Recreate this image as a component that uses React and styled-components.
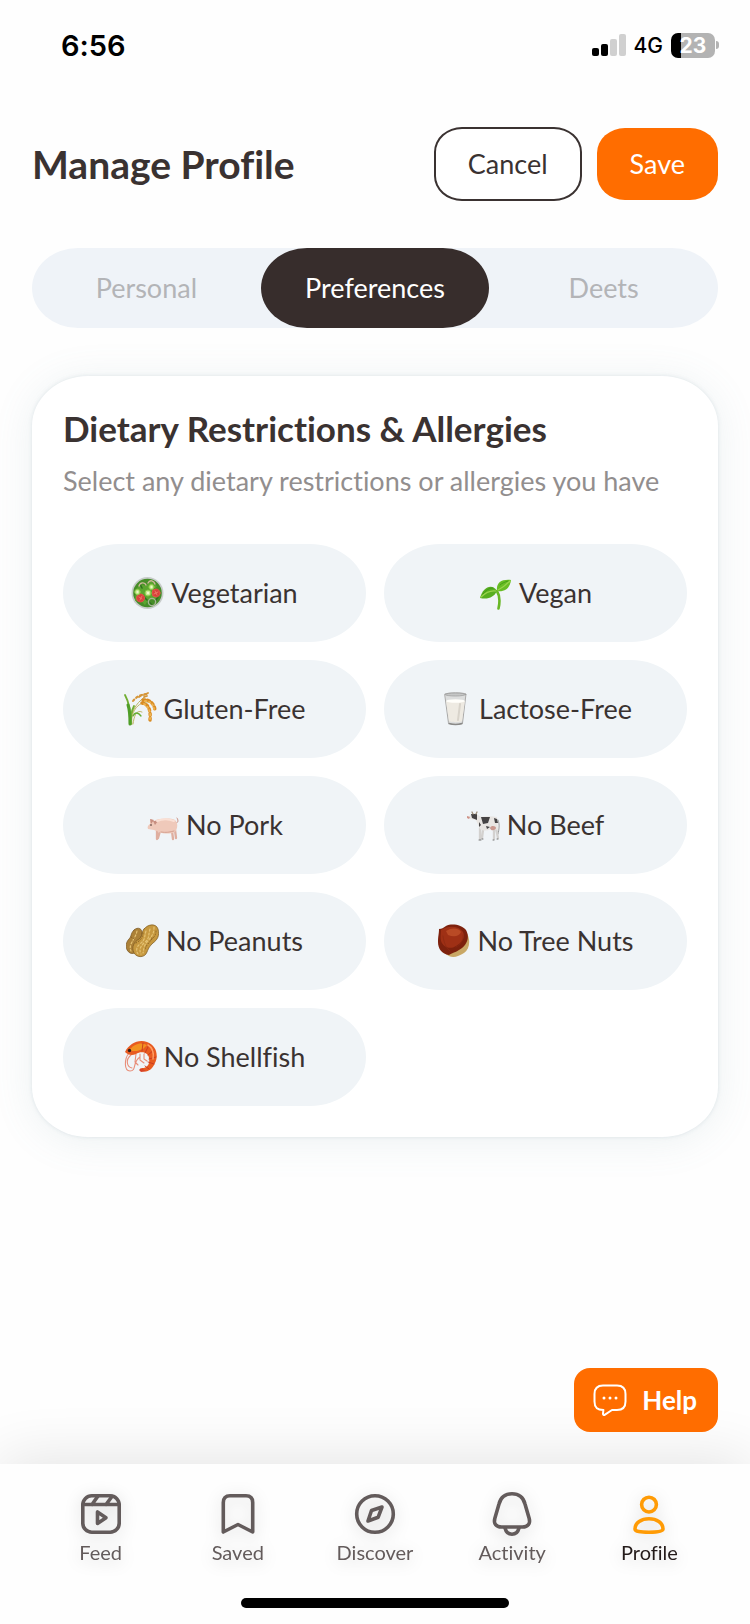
import React, { useState } from "react";
import styled, { createGlobalStyle, css } from "styled-components";

const ink = "#3a3231";
const orange = "#ff6d00";

const GlobalStyle = createGlobalStyle`
  *, *::before, *::after { box-sizing: border-box; }
  body {
    margin: 0;
    background: #fefefe;
    color: ${ink};
    font-family: Lato, "Liberation Sans", sans-serif;
    font-variant-ligatures: none;
  }
  button { font: inherit; font-variant-ligatures: none; cursor: pointer; border: 0; }
  h1, h2, p { margin: 0; }
  svg { display: block; flex: none; }
`;

const Screen = styled.div`
  min-height: 100vh;
  display: flex;
  flex-direction: column;
`;

const StatusBar = styled.div`
  display: flex;
  align-items: center;
  justify-content: space-between;
  height: 90px;
  padding: 0 31px 0 61px;
  color: #000;
  font-family: Inter, "Liberation Sans", sans-serif;
`;

const Time = styled.span`
  font-size: 29px;
  font-weight: 600;
`;

const StatusIcons = styled.div`
  display: flex;
  align-items: center;
  gap: 8px;
  font-size: 21px;
  font-weight: 500;
`;

const Battery = styled.div`
  display: flex;
  align-items: center;
  gap: 1px;
  &::after {
    content: "";
    width: 3px;
    height: 8px;
    border-radius: 0 4px 4px 0;
    background: #b3b3b3;
  }
`;

const BatteryLevel = styled.span`
  width: 44px;
  height: 25px;
  border-radius: 7px;
  background: linear-gradient(to right, #000 10px, #b3b3b3 10px);
  color: #fff;
  font-size: 21px;
  font-weight: 700;
  line-height: 25px;
  text-align: center;
`;

const Header = styled.header`
  display: flex;
  align-items: center;
  gap: 15px;
  padding: 37px 32px 0;
`;

const Title = styled.h1`
  flex: 1;
  font-size: 39px;
  line-height: 48px;
  font-weight: 700;
`;

const ActionButton = styled.button`
  height: ${(p) => (p.$primary ? 72 : 74)}px;
  padding: 0 ${(p) => (p.$primary ? 33 : 32)}px;
  border-radius: 28px / 25px;
  font-size: 27px;
  line-height: 30px;
  ${(p) =>
    p.$primary
      ? css`
          background: ${orange};
          color: #fff;
        `
      : css`
          background: #fff;
          color: ${ink};
          border: 2px solid ${ink};
        `}
`;

const Tabs = styled.div`
  display: grid;
  grid-template-columns: repeat(3, 1fr);
  margin: 47px 32px 0;
  border-radius: 46px / 40px;
  background: #eff3f8;
`;

const Tab = styled.button`
  height: 80px;
  border-radius: 46px / 40px;
  font-size: 27px;
  line-height: 30px;
  background: ${(p) => (p.$active ? "#372d2c" : "transparent")};
  color: ${(p) => (p.$active ? "#fff" : "#b3b4b7")};
`;

const Card = styled.section`
  margin: 48px 32px 0;
  padding: 31px;
  border-radius: 56px / 50px;
  background: #fff;
  box-shadow: 0 0 4px rgba(110, 140, 155, 0.18), 0 4px 40px rgba(110, 150, 160, 0.12);
`;

const CardTitle = styled.h2`
  font-size: 35px;
  line-height: 42px;
  font-weight: 700;
`;

const CardHint = styled.p`
  margin-top: 16px;
  font-size: 27px;
  line-height: 32px;
  color: #928e8e;
`;

const Options = styled.div`
  display: grid;
  grid-template-columns: 1fr 1fr;
  gap: 18px;
  margin-top: 47px;
`;

const Option = styled.button`
  display: flex;
  align-items: center;
  justify-content: center;
  gap: 7px;
  height: 98px;
  border-radius: 56px / 49px;
  background: #f0f4f7;
  color: ${ink};
  font-size: 27px;
  line-height: 30px;
  box-shadow: ${(p) => (p.$selected ? `inset 0 0 0 3px ${orange}` : "none")};
`;

const HelpButton = styled.button`
  display: flex;
  align-items: center;
  gap: 15px;
  align-self: flex-end;
  position: relative;
  z-index: 1;
  height: 64px;
  margin: auto 32px 32px 0;
  padding: 0 21px 0 19px;
  border-radius: 16px;
  background: ${orange};
  color: #fff;
  font-size: 26px;
  font-weight: 700;
`;

const BottomBar = styled.footer`
  padding: 28px 32px 16px;
  background: #fefefe;
  box-shadow: 0 -4px 60px rgba(0, 0, 0, 0.11);
`;

const Nav = styled.nav`
  display: grid;
  grid-template-columns: repeat(5, 1fr);
`;

const NavLink = styled.a`
  display: flex;
  flex-direction: column;
  align-items: center;
  gap: 4px;
  color: ${(p) => (p.$active ? "#241b1a" : "#635b5b")};
  font-size: 20px;
  line-height: 24px;
  text-decoration: none;
  filter: drop-shadow(0 3px 8px rgba(0, 0, 0, 0.16));
  svg { color: ${(p) => (p.$active ? "#ff9b05" : "#635b5b")}; }
`;

const HomeIndicator = styled.div`
  width: 268px;
  height: 10px;
  margin: 34px auto 0;
  border-radius: 5px;
  background: #000;
`;

const SignalIcon = () => (
  <svg width="34" height="22" viewBox="0 0 34 22" aria-hidden="true">
    <rect x="0" y="14" width="7" height="8" rx="2" />
    <rect x="9" y="10" width="7" height="12" rx="2" />
    <rect x="18" y="5" width="7" height="17" rx="2" fill="#d0d0d0" />
    <rect x="27" y="0" width="7" height="22" rx="2" fill="#d0d0d0" />
  </svg>
);

const ChatIcon = () => (
  <svg width="34" height="34" viewBox="0 0 34 34" fill="none" stroke="currentColor" strokeWidth="2" strokeLinejoin="round" aria-hidden="true">
    <path d="M10 2.5h14c6 0 8.5 2.5 8.5 8.5v7.5c0 6-2.5 8.5-8.5 8.5h-5l-7 4.7c-1.2.8-2.2.2-2-1.2l.4-3.5C4 27 1.5 24.5 1.5 18.5V11C1.5 5 4 2.5 10 2.5Z" />
    <g fill="currentColor" stroke="none">
      <circle cx="11" cy="15" r="1.5" />
      <circle cx="17" cy="15" r="1.5" />
      <circle cx="23" cy="15" r="1.5" />
    </g>
  </svg>
);

const NavSvg = ({ children }) => (
  <svg width="44" height="44" viewBox="0 0 44 44" fill="none" stroke="currentColor" strokeWidth="3.6" strokeLinecap="round" strokeLinejoin="round" overflow="visible" aria-hidden="true">
    {children}
  </svg>
);

const FeedIcon = () => (
  <NavSvg>
    <rect x="3.8" y="3.8" width="36.4" height="36.4" rx="9" />
    <path d="M4 12.5h36M19 4l-6 8.5M33 4.5l-6 8" />
    <path d="M18.5 20v11.5l8.5-5.8Z" />
  </NavSvg>
);

const SavedIcon = () => (
  <NavSvg>
    <path d="M7.3 40V10.5q0-6.7 6.7-6.7h16q6.7 0 6.7 6.7V40L22 32.5Z" />
  </NavSvg>
);

const DiscoverIcon = () => (
  <NavSvg>
    <circle cx="22" cy="22" r="18.3" />
    <path d="M29 15l-3.8 10.2L15 29l3.5-10.5Z" />
  </NavSvg>
);

const ActivityIcon = () => (
  <NavSvg>
    <path d="M22 1.8C14.5 1.8 10.5 6 9 12L4.8 26.5C3.4 31.5 6 35 11.5 35h21c5.5 0 8.1-3.5 6.7-8.5L35 12C33.5 6 29.5 1.8 22 1.8Z" />
    <path d="M15 36c1 4 3.5 6.2 7 6.2s6-2.2 7-6.2" />
  </NavSvg>
);

const ProfileIcon = () => (
  <NavSvg>
    <circle cx="22" cy="12.6" r="7.4" />
    <path d="M8 37c0-6.5 6.5-10.2 14-10.2S36 30.5 36 37c0 2.5-5.5 3.2-14 3.2S8 39.5 8 37Z" />
  </NavSvg>
);

const FoodSvg = ({ children }) => (
  <svg width="33" height="34" viewBox="0 0 33 34" fill="none" strokeLinecap="round" strokeLinejoin="round" aria-hidden="true">
    {children}
  </svg>
);

const Salad = () => (
  <FoodSvg>
    <circle cx="16.5" cy="17" r="16" fill="#c7ccca" />
    <circle cx="16.5" cy="17" r="14.3" fill="#468d28" />
    <path d="M5 13l5-5 5 2 5-5 6 5-3 5 6 3-4 6-7-1-4 6-5-5-5 1Z" fill="#5ba52f" />
    <path d="M4 18l4-2M12 20l4 4M21 11l4 5M9 8l2 4M18 26l3 3M27 21l-3 4" stroke="#2f7020" strokeWidth="1.6" />
    <path d="M8 10c1-4 6-4 7-1M17 7c2-4 6-2 7 1" stroke="#cfb89c" strokeWidth="1.4" />
    <circle cx="21" cy="26" r="3.6" stroke="#a7b694" strokeWidth="1.4" />
    <g fill="#d8403b" stroke="#e05548">
      <circle cx="9.5" cy="22" r="4" /><circle cx="25" cy="17" r="4" />
    </g>
    <path d="M8 21l3 2M11 20l-2 4M24 15l2 4M27 16l-4 2" stroke="#f08c72" strokeWidth=".7" />
    <g fill="#c6e990" stroke="#86c844">
      <circle cx="6.5" cy="16" r="2.7" /><circle cx="17" cy="17" r="3" /><circle cx="20.5" cy="11" r="2.6" />
    </g>
    <g fill="#f1f8ca"><circle cx="6.5" cy="16" r="1" /><circle cx="17" cy="17" r="1.2" /><circle cx="20.5" cy="11" r="1" /></g>
  </FoodSvg>
);

const Sprout = () => (
  <FoodSvg>
    <path d="M18 15c3 5 3 11 1.5 17.5" stroke="#68b725" strokeWidth="2.6" />
    <path d="M18 15C13 7 4 11 1 22c8 2 14-1 17-7Z" fill="#57ae20" />
    <path d="M18 15c-1-8 4-12 14-11-1 8-6 12-14 11Z" fill="#68bd24" />
    <path d="M2 21c5-5 9-7 15-6M19 14c4-2 8-5 12-9" stroke="#9ad34d" strokeWidth="1.2" />
    <path d="M4 18c3-4 6-6 10-6M21 9c2-2 5-3 8-4" stroke="#3d9617" strokeWidth=".8" />
  </FoodSvg>
);

const Rice = () => (
  <FoodSvg>
    <path d="M7 32c-1-9 3-20 15-28M8 32c-2-10 5-23 17-22M9 32c1-7 3-15 9-12" stroke="#b9ad57" strokeWidth=".9" />
    <path d="M7 32C7 22 6 12 1 3M7 32c0-8 0-12 3-18" stroke="#71ae32" strokeWidth="1.8" />
    <path d="M6 32c0-6 0-13-2-19" stroke="#4f9e28" strokeWidth="3" />
    <path d="M9 24c2-4 5-4 8 0" stroke="#65ad34" strokeWidth="1.3" />
    <path d="M9 9c3-4 8-7 15-7" stroke="#d59538" strokeWidth="2" strokeDasharray="2 2.5" />
    <path d="M15 5l3-2M20 3l4-2M20 5l3-1" stroke="#d59538" strokeWidth="1.8" />
    <path d="M19 8c6-1 11 3 12 10M18 11c6 1 9 6 8 17" stroke="#d98c24" strokeWidth="3.4" strokeDasharray="2 2.8" />
    <path d="M21 9c5 0 9 4 9 8M20 12c5 3 7 9 6 15" stroke="#efb552" strokeWidth="1.8" strokeDasharray="1.5 2.5" />
  </FoodSvg>
);

const Milk = () => (
  <FoodSvg>
    <path d="M6 2c3-1.5 18-1.5 21 0l-3.5 29c-.3 2-13.7 2-14 0Z" fill="#dcdddd" stroke="#aaa9a8" />
    <path d="M7 9c4 1.3 15 1.3 19 0l-3 20c-.3 1.5-12.7 1.5-13 0Z" fill="#eeeae2" />
    <ellipse cx="16.5" cy="9" rx="9.3" ry="1.8" fill="#fffefa" />
    <ellipse cx="16.5" cy="2.5" rx="10.3" ry="1.5" fill="#c5c6c6" stroke="#999" strokeWidth=".7" />
    <path d="M10 31.5c4 1.2 9 1.2 13 0" stroke="#8a8987" strokeWidth="1.5" />
    <path d="M21 12l-2 16" stroke="#d8d3ca" strokeWidth="2" />
  </FoodSvg>
);

const Pig = () => (
  <FoodSvg>
    <path d="M30 15c3 0 2-4 1-5" stroke="#c88c7e" strokeWidth="1" />
    <path d="M11 22v9M14 23l-2 7M26 23l1 8M29 22l1 8" stroke="#dfae9f" strokeWidth="2.3" />
    <path d="M4 13l1-2 3 2c5-3 17-3 21-1 3 3 3 8 0 12-5 2-11 2-16 0l-5-2-6-1c-1-2 0-4 2-5Z" fill="#efc9ba" />
    <path d="M8 12l-4-1 1 5ZM12 13l-5 0 2 4Z" fill="#c78e80" />
    <path d="M11 13c5-2 12-2 17 0" stroke="#fae0d5" strokeWidth="2" />
    <path d="M15 24c5 1 9 0 13-1" stroke="#d5a191" />
    <circle cx="5" cy="17" r=".8" fill="#392522" />
  </FoodSvg>
);

const Cow = () => (
  <FoodSvg>
    <path d="M31 12c2 4 1 10 0 14" stroke="#999" strokeWidth="1" />
    <path d="M13 20v11M16 22l-1 8M27 20l0 11M29 20l2 10" stroke="#d3d1cf" strokeWidth="2.3" />
    <path d="M4 7l4-2 6 4c5-1 11-1 16 0l1 13-7-1c-4 2-8 2-11 0L9 12 3 11 0 9Z" fill="#e8e5e2" />
    <path d="M4 6l6 0 0 6-5-2ZM14 9l9 0-2 6-5 1ZM27 10l3 1 1 4-3 0ZM12 14l2 3-2 2ZM19 18l4 1-3 2Z" fill="#454344" />
    <path d="M6 6L5 4M9 6l1-2" stroke="#9b8c77" strokeWidth="1.3" />
    <path d="M23 20c1-3 6-2 6 0s-5 4-6 0Z" fill="#c9988e" />
    <path d="M0 8l3 1-1 2-2-1Z" fill="#cf9288" />
    <path d="M12 32h2M16 31h-1M26 32h1M30 31h1" stroke="#777" strokeWidth="1" />
  </FoodSvg>
);

const Peanuts = () => (
  <FoodSvg>
    <path d="M8 6c4-4 9-1 8 4-1 4-3 6-3 11 0 6-4 10-9 8-5-3-5-10-1-14 3-3 1-5 5-9Z" fill="#ac8138" stroke="#77531f" strokeWidth=".7" />
    <path d="M18 5c4-5 12-6 14 0 2 7-1 11-5 14-3 3-4 4-6 9-2 6-10 6-13 1-3-6 0-11 5-14 4-3 2-6 5-10Z" fill="#c6983f" stroke="#7a5820" strokeWidth=".7" />
    <path d="M20 7c-2 6 0 8-6 13-4 3-4 7-2 10M24 5c-2 7 0 9-6 14-4 4-5 7-3 11M28 3c0 8-3 10-7 15-3 3-3 7-4 11M11 7c-1 5-3 7-6 13-1 3-1 5 0 7" stroke="#e4c273" strokeWidth="1.2" strokeDasharray="2 2" />
    <path d="M17 9c0 4-3 8-7 10M26 14c-2 5-6 6-7 12M30 7c0 5-3 7-5 9M5 13l5 3" stroke="#8c6425" strokeDasharray="1 2" />
  </FoodSvg>
);

const Chestnut = () => (
  <FoodSvg>
    <path d="M29 8c5 7 4 17-2 21-6 4-13 6-18 1l6-10Z" fill="#c9a866" />
    <path d="M2 5c3 0 4-1 7-3 6-3 16-1 20 4 4 7 1 14-4 18-5 4-8 4-13 7C5 30 1 25 1 18c0-6 1-8 1-13Z" fill="#7d210d" />
    <path d="M4 6c8-5 18-4 22 2 3 6-2 11-7 14C13 26 6 23 4 17 3 13 4 10 4 6Z" fill="#9f3015" />
    <path d="M9 7c6-4 13-3 15 1-2 5-8 5-13 3Z" fill="#b94a25" />
    <path d="M6 12c1 7 3 12 7 15M26 11c1 5-3 10-7 12" stroke="#8d2912" strokeWidth=".8" />
  </FoodSvg>
);

const Shrimp = () => (
  <FoodSvg>
    <path d="M5 13c-5 6-5 18 1 18 7 0 2-9 10-14M7 15c-6 5-4 12 1 13M12 14l-1 8 3 3M16 14l0 6 4 3M20 14v5l3 2" stroke="#e88d78" strokeWidth="1.1" />
    <path d="M1 12C5 4 14-1 23 2c9 3 12 13 8 21-3 7-8 10-14 8l1-3c6 0 8-5 7-10-1-6-8-7-13-4-4 2-8 1-11-2Z" fill="#e85b20" />
    <path d="M4 11C11 3 17 2 23 5l-4 4-6 2Z" fill="#f39321" />
    <path d="M19 3l-1 8M25 5l-4 8M30 10l-6 5M32 17l-7 2M30 24l-6-2M25 29l-4-3" stroke="#c63920" strokeWidth=".9" />
    <path d="M24 5c5 3 6 8 5 14" stroke="#ff9e65" strokeWidth="1.5" />
    <path d="M17 28l-2 2 2 2 5-1" fill="#d84427" />
    <circle cx="5.5" cy="10.5" r="1.7" fill="#321d19" />
  </FoodSvg>
);

const tabNames = ["Personal", "Preferences", "Deets"];

const diets = [
  ["Vegetarian", Salad],
  ["Vegan", Sprout],
  ["Gluten-Free", Rice],
  ["Lactose-Free", Milk],
  ["No Pork", Pig],
  ["No Beef", Cow],
  ["No Peanuts", Peanuts],
  ["No Tree Nuts", Chestnut],
  ["No Shellfish", Shrimp],
];

const navItems = [
  ["Feed", FeedIcon],
  ["Saved", SavedIcon],
  ["Discover", DiscoverIcon],
  ["Activity", ActivityIcon],
  ["Profile", ProfileIcon],
];

export default function App() {
  const [tab, setTab] = useState("Preferences");
  const [selected, setSelected] = useState([]);

  const toggle = (name) =>
    setSelected((list) => (list.includes(name) ? list.filter((n) => n !== name) : [...list, name]));

  return (
    <Screen>
      <GlobalStyle />
      <StatusBar>
        <Time>6:56</Time>
        <StatusIcons>
          <SignalIcon />
          <span>4G</span>
          <Battery>
            <BatteryLevel>23</BatteryLevel>
          </Battery>
        </StatusIcons>
      </StatusBar>

      <Header>
        <Title>Manage Profile</Title>
        <ActionButton type="button">Cancel</ActionButton>
        <ActionButton type="button" $primary>Save</ActionButton>
      </Header>

      <Tabs role="tablist">
        {tabNames.map((name) => (
          <Tab key={name} type="button" role="tab" aria-selected={tab === name} $active={tab === name} onClick={() => setTab(name)}>
            {name}
          </Tab>
        ))}
      </Tabs>

      <Card>
        <CardTitle>Dietary Restrictions &amp; Allergies</CardTitle>
        <CardHint>Select any dietary restrictions or allergies you have</CardHint>
        <Options>
          {diets.map(([name, Icon]) => (
            <Option key={name} type="button" aria-pressed={selected.includes(name)} $selected={selected.includes(name)} onClick={() => toggle(name)}>
              <Icon />
              {name}
            </Option>
          ))}
        </Options>
      </Card>

      <HelpButton type="button">
        <ChatIcon />
        Help
      </HelpButton>

      <BottomBar>
        <Nav>
          {navItems.map(([name, Icon]) => (
            <NavLink key={name} href={`#${name.toLowerCase()}`} $active={name === "Profile"}>
              <Icon />
              {name}
            </NavLink>
          ))}
        </Nav>
        <HomeIndicator />
      </BottomBar>
    </Screen>
  );
}
